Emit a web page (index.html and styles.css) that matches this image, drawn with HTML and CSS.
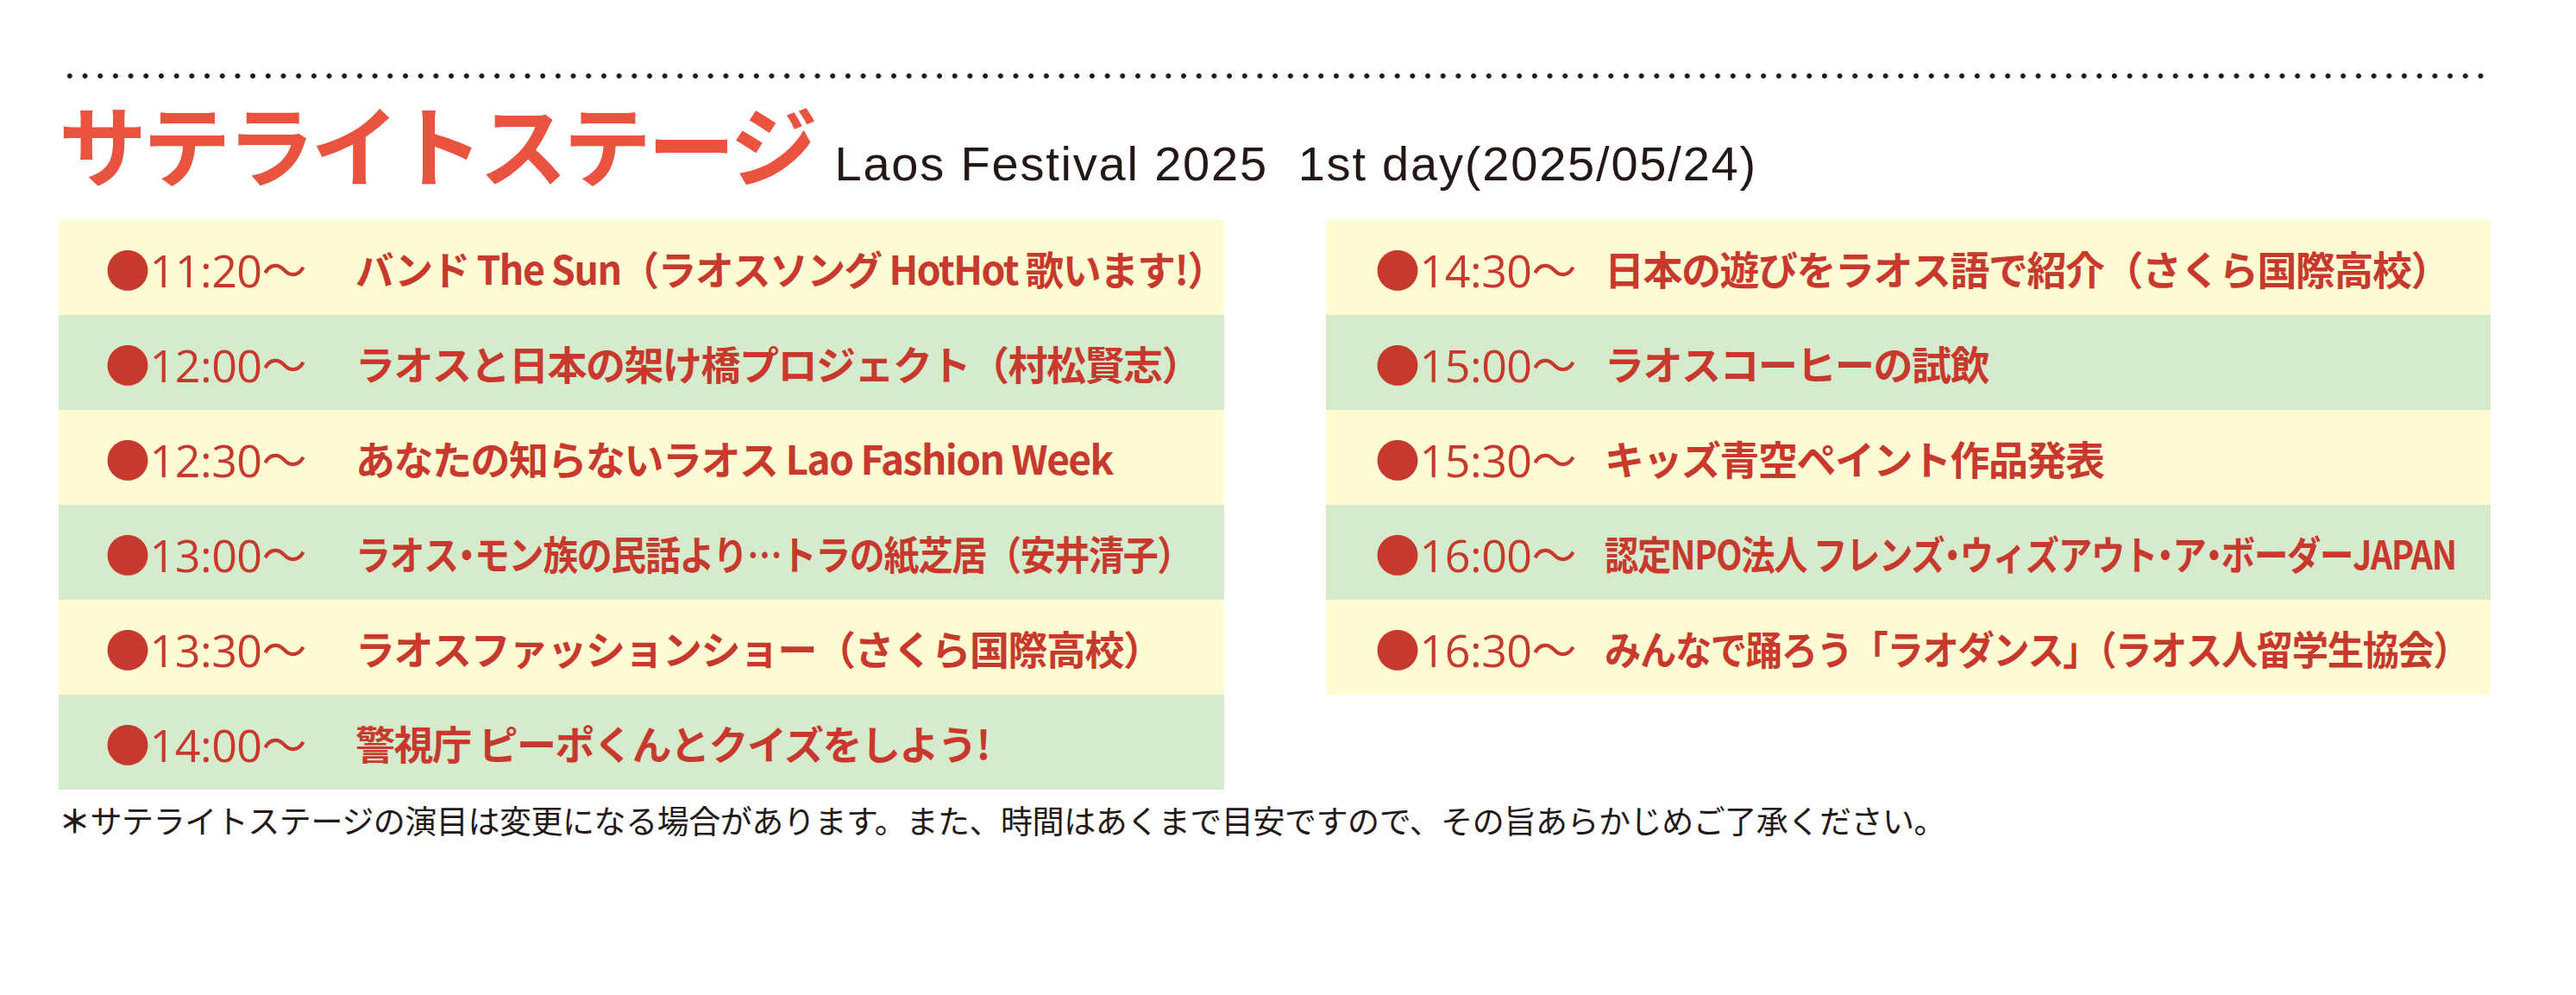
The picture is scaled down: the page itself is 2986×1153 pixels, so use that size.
FILE: index.html
```html
<!DOCTYPE html>
<html lang="ja">
<head>
    <meta charset="UTF-8">
    <meta name="viewport" content="width=device-width, initial-scale=1.0">
    <title>サテライトステージ</title>
    <link rel="stylesheet" href="styles.css">
</head>
<body>
    <div id="page">
        <div class="rule"></div>

        <div class="heading">
            <h1>サテライトステージ</h1>
            <p class="sub">Laos Festival 2025&nbsp;&nbsp;1st day(2025/05/24)</p>
        </div>

        <div class="columns">
            <ul class="slots slots-left">
                <li><span class="time">●11:20～</span><span class="act snug">バンド The Sun（ラオスソング HotHot 歌います!）</span></li>
                <li><span class="time">●12:00～</span><span class="act">ラオスと日本の架け橋プロジェクト（村松賢志）</span></li>
                <li><span class="time">●12:30～</span><span class="act">あなたの知らないラオス Lao Fashion Week</span></li>
                <li><span class="time">●13:00～</span><span class="act narrow-more">ラオス<span class="half">・</span>モン族の民話より…トラの紙芝居（安井清子）</span></li>
                <li><span class="time">●13:30～</span><span class="act">ラオスファッションショー（さくら国際高校）</span></li>
                <li><span class="time">●14:00～</span><span class="act">警視庁 ピーポくんとクイズをしよう!</span></li>
            </ul>
            <ul class="slots slots-right">
                <li><span class="time">●14:30～</span><span class="act">日本の遊びをラオス語で紹介（さくら国際高校）</span></li>
                <li><span class="time">●15:00～</span><span class="act">ラオスコーヒーの試飲</span></li>
                <li><span class="time">●15:30～</span><span class="act">キッズ青空ペイント作品発表</span></li>
                <li><span class="time">●16:00～</span><span class="act narrower">認定NPO法人 フレンズ<span class="half">・</span>ウィズアウト<span class="half">・</span>ア<span class="half">・</span>ボーダーJAPAN</span></li>
                <li><span class="time">●16:30～</span><span class="act narrow">みんなで踊ろう「ラオダンス」（ラオス人留学生協会）</span></li>
            </ul>
        </div>

        <p class="note"><span class="mark">＊</span>サテライトステージの演目は変更になる場合があります。また、時間はあくまで目安ですので、その旨あらかじめご了承ください。</p>
    </div>
</body>
</html>
```

FILE: styles.css
```css
body {
    margin: 0;
    background-color: #ffffff;
    font-family: "Noto Sans CJK JP", sans-serif;
    color: #231815;
}

#page {
    width: 2819px;
    padding: 85px 0 0 68px;
}

.rule {
    height: 6px;
    margin-left: 4px;
    background-image: radial-gradient(circle, #231815 2.6px, transparent 3.2px);
    background-size: 17.7px 6px;
    background-repeat: repeat-x;
}

.heading {
    display: flex;
    align-items: baseline;
    margin-top: 8px;
    height: 156px;
}

.heading h1 {
    margin: 0;
    font-size: 102px;
    font-weight: 700;
    line-height: 1.3;
    letter-spacing: -4.5px;
    color: #e9533f;
}

.sub {
    margin: 0 0 0 24px;
    font-family: "Liberation Sans", Arial, sans-serif;
    font-size: 56px;
    letter-spacing: 1.8px;
    white-space: pre;
}

.columns {
    display: grid;
    grid-template-columns: 1351px 1350px;
    column-gap: 118px;
    align-items: start;
}

.slots {
    list-style: none;
    margin: 0;
    padding: 0;
}

.slots li {
    display: flex;
    align-items: center;
    height: 110px;
    padding-left: 54px;
    background-color: #fffbd2;
    color: #c8392d;
    white-space: nowrap;
}

.slots li:nth-child(even) {
    background-color: #d6eacc;
}

.time {
    flex: none;
    width: 290px;
    font-family: "Open Sans", "Noto Sans CJK JP", sans-serif;
    font-size: 52px;
    letter-spacing: -0.5px;
}

.slots-right li {
    padding-left: 57px;
}

.slots-right .time {
    width: 266px;
}

.act {
    font-size: 46px;
    font-weight: 700;
    letter-spacing: -1.5px;
    transform-origin: left center;
}

/* long titles are set narrower so they fit the row */
.act.snug {
    transform: scaleX(0.97);
}

.act.narrow {
    transform: scaleX(0.92);
}

.act.narrow-more {
    transform: scaleX(0.89);
}

.act.narrower {
    transform: scaleX(0.855);
}

/* half-width middle dot */
.half {
    font-feature-settings: "halt";
}

.note {
    margin: 10px 0 0 0;
    font-size: 37px;
    letter-spacing: -0.45px;
    line-height: 1.4;
    white-space: nowrap;
}

.note .mark {
    font-weight: 700;
}
```
